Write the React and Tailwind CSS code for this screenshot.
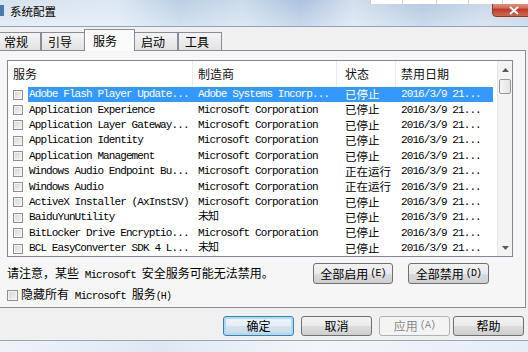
import React from 'react';

const cjk = "font-['Noto_Sans_CJK_SC',sans-serif]";
const mono = "font-['Liberation_Mono','Noto_Sans_CJK_SC',monospace] tracking-[-0.9px]";

const services = [
  { name: 'Adobe Flash Player Update...', vendor: 'Adobe Systems Incorp...', status: '已停止', selected: true },
  { name: 'Application Experience', vendor: 'Microsoft Corporation', status: '已停止' },
  { name: 'Application Layer Gateway...', vendor: 'Microsoft Corporation', status: '已停止' },
  { name: 'Application Identity', vendor: 'Microsoft Corporation', status: '已停止' },
  { name: 'Application Management', vendor: 'Microsoft Corporation', status: '已停止' },
  { name: 'Windows Audio Endpoint Bu...', vendor: 'Microsoft Corporation', status: '正在运行' },
  { name: 'Windows Audio', vendor: 'Microsoft Corporation', status: '正在运行' },
  { name: 'ActiveX Installer (AxInstSV)', vendor: 'Microsoft Corporation', status: '已停止' },
  { name: 'BaiduYunUtility', vendor: '未知', status: '已停止' },
  { name: 'BitLocker Drive Encryptio...', vendor: 'Microsoft Corporation', status: '已停止' },
  { name: 'BCL EasyConverter SDK 4 L...', vendor: '未知', status: '已停止' },
];

const tabs = [
  { label: '常规' },
  { label: '引导' },
  { label: '服务', active: true },
  { label: '启动' },
  { label: '工具' },
];

const Checkbox = ({ big }) => (
  <span
    className={`block shrink-0 border border-[#8f8f8f] bg-linear-to-br from-[#d4d4d4] to-[#f7f7f7] shadow-[inset_0_0_0_1px_#f3f3f3] ${
      big ? 'h-[11px] w-[11px]' : 'h-[10px] w-[10px]'
    }`}
  />
);

const WinButton = ({ children, kind, className }) => {
  let look =
    'border-[#707070] bg-[linear-gradient(#f2f2f2_0%,#ebebeb_50%,#dddddd_51%,#cfcfcf_100%)] text-black';
  if (kind === 'default') {
    look =
      'border-[#3c7fb1] bg-[linear-gradient(#f0f5f9_0%,#e6eef5_50%,#d6e3ee_51%,#cad9e6_100%)] shadow-[inset_0_0_0_2px_#a9dcf6] text-black';
  }
  if (kind === 'disabled') {
    look = 'border-[#adb2b5] bg-[#f4f4f4] text-[#8a8a8a]';
  }
  return (
    <div
      className={`flex items-center justify-center whitespace-nowrap rounded-[3px] border text-[12px] leading-[14px] ${cjk} ${look} ${className}`}
    >
      {children}
    </div>
  );
};

const ServiceRow = ({ name, vendor, status, selected }) => (
  <div className="flex h-[15.4px] shrink-0 items-center">
    <div className="flex w-[20px] shrink-0 items-center pl-[5px]">
      <Checkbox />
    </div>
    <div
      className={`flex h-full w-[465px] shrink-0 items-center whitespace-nowrap text-[11px] leading-none ${
        selected ? 'bg-[#3399ff] text-white' : 'text-black'
      }`}
    >
      <span className={`w-[165px] shrink-0 pl-[1px] ${mono}`}>{name}</span>
      <span className={`w-[144px] shrink-0 pl-[5px] ${mono}`}>{vendor}</span>
      <span className={`w-[59px] shrink-0 pl-[8px] text-[11.5px] ${cjk}`}>{status}</span>
      <span className={`w-[97px] shrink-0 pl-[5px] ${mono}`}>2016/3/9 21...</span>
    </div>
  </div>
);

const Arrow = ({ down }) => (
  <svg width="7" height="4" viewBox="0 0 7 4" className={down ? 'rotate-180' : ''}>
    <path d="M0 4 L3.5 0 L7 4 Z" fill="#5a5a5a" />
  </svg>
);

export default function App() {
  return (
    <div className="relative flex h-[352px] w-[528px] flex-col overflow-hidden bg-[#f0f0f0]">
      {/* title bar */}
      <div className="flex h-[27px] shrink-0 items-start border-b border-[#8ea2b8] bg-[linear-gradient(to_bottom,rgba(255,255,255,0.05),rgba(255,255,255,0.4)),linear-gradient(to_right,#d3e0ee_0%,#dbe6f1_22%,#b7cde4_34%,#c9d9ea_46%,#a6c0dc_57%,#d0dded_67%,#acc4de_80%,#c4d5e8_92%,#b6cbe2_100%)]">
        <div className="mt-[5px] h-[11px] w-[4px] bg-[#4a78b0]" />
        <div className={`ml-[6px] mt-[4px] text-[11.5px] leading-[14px] text-black ${cjk}`}>系统配置</div>
        <div className="-mr-[7px] ml-auto flex h-[17px] w-[43px] items-center justify-center rounded-bl-[4px] border border-[#8a3a30] bg-[linear-gradient(#e9a99a_0%,#d0705e_45%,#c0392b_55%,#d36a50_100%)]">
          <svg width="10" height="9" viewBox="0 0 10 9" className="mt-[3px]">
            <path d="M1 1 L9 8 M9 1 L1 8" stroke="white" strokeWidth="2" />
          </svg>
        </div>
      </div>

      {/* overlapping window strip */}
      <div className="absolute left-[370px] top-0 flex h-[4px] w-[158px] border-l border-[#cfcfcf] bg-white">
        <div className="w-[32px] border-r border-[#d4d4d4]" />
        <div className="w-[34px] border-r border-[#d4d4d4]" />
        <div className="w-[32px] border-r border-[#d4d4d4]" />
        <div className="w-[34px] border-r border-[#d4d4d4]" />
      </div>

      {/* tabs */}
      <div className="-ml-[3px] flex h-[23px] shrink-0 items-end">
        {tabs.map((t) =>
          t.active ? (
            <div
              key={t.label}
              className={`relative z-10 -mb-px -mx-[1px] flex h-[22px] w-[51px] items-start border border-b-0 border-[#898c95] bg-[#fbfbfb] pl-[8px] pt-[4px] text-[12px] leading-[14px] text-black ${cjk}`}
            >
              {t.label}
            </div>
          ) : (
            <div
              key={t.label}
              className={`flex h-[18px] w-[44px] items-center border border-b-0 border-[#898c95] bg-[linear-gradient(#f4f4f4,#e3e3e3)] pl-[6px] text-[12px] leading-[14px] text-black ${cjk}`}
            >
              {t.label}
            </div>
          )
        )}
      </div>

      {/* tab panel */}
      <div className="-ml-px flex h-[258px] w-[527px] shrink-0 flex-col border border-[#898c95] bg-[#f6f6f6]">
        {/* list */}
        <div className="ml-[7px] mt-[9px] flex h-[197px] w-[506px] shrink-0 border border-[#828790] bg-white">
          <div className="flex min-w-0 flex-1 flex-col overflow-hidden">
            <div className={`flex h-[26px] shrink-0 items-center text-[12px] leading-[14px] text-[#111] ${cjk}`}>
              <div className="flex h-full w-[185px] shrink-0 items-center border-r border-[#ebebeb] pl-[5px]">服务</div>
              <div className="flex h-full w-[144px] shrink-0 items-center border-r border-[#ebebeb] pl-[5px]">制造商</div>
              <div className="flex h-full w-[59px] shrink-0 items-center border-r border-[#ebebeb] pl-[8px]">状态</div>
              <div className="flex h-full flex-1 items-center pl-[5px]">禁用日期</div>
            </div>
            {services.map((s) => (
              <ServiceRow key={s.name} {...s} />
            ))}
            {/* next row, scrolled mostly out of view */}
            <div className="flex h-[15.4px] shrink-0 items-center pl-[5px]">
              <Checkbox />
            </div>
          </div>
          {/* scrollbar */}
          <div className="flex w-[15px] shrink-0 flex-col border-l border-[#e6e6e6] bg-[#f3f3f3]">
            <div className="flex h-[17px] items-center justify-center">
              <Arrow />
            </div>
            <div className="mx-[1px] mt-[1px] h-[15px] rounded-[2px] border border-[#979797] bg-[linear-gradient(to_right,#f6f6f6,#e4e4e4)]" />
            <div className="flex-1" />
            <div className="flex h-[17px] items-center justify-center">
              <Arrow down />
            </div>
          </div>
        </div>

        {/* note + enable/disable all */}
        <div className="mt-[6px] flex h-[21px] shrink-0 items-center pl-[7px] pr-[36px]">
          <span className="whitespace-nowrap text-[12px] leading-[14px] text-black">
            <span className={cjk}>请注意，某些</span>
            <span className={`text-[11px] ${mono}`}> Microsoft </span>
            <span className={cjk}>安全服务可能无法禁用。</span>
          </span>
          <div className="flex-1" />
          <WinButton className="h-[21px] w-[80px]">
            全部启用<span className={`ml-[2px] text-[10px] ${mono}`}>(E)</span>
          </WinButton>
          <WinButton className="ml-[15px] h-[21px] w-[81px]">
            全部禁用<span className={`ml-[2px] text-[10px] ${mono}`}>(D)</span>
          </WinButton>
        </div>

        {/* hide MS services */}
        <div className="mt-[6px] flex h-[11px] shrink-0 items-center pl-[7px]">
          <Checkbox big />
          <span className="ml-[3px] whitespace-nowrap text-[12px] leading-[14px] text-black">
            <span className={cjk}>隐藏所有</span>
            <span className={`text-[11px] ${mono}`}> Microsoft </span>
            <span className={cjk}>服务</span>
            <span className={`text-[10px] ${mono}`}>(H)</span>
          </span>
        </div>
      </div>

      {/* bottom buttons */}
      <div className="flex h-[32px] shrink-0 items-start justify-end pr-[4px] pt-[8px]">
        <WinButton kind="default" className="h-[20px] w-[71px]">确定</WinButton>
        <WinButton className="ml-[7px] h-[20px] w-[71px]">取消</WinButton>
        <WinButton kind="disabled" className="ml-[7px] h-[20px] w-[71px]">
          应用<span className={`ml-[2px] text-[10px] ${mono}`}>(A)</span>
        </WinButton>
        <WinButton className="ml-[3px] h-[20px] w-[71px]">帮助</WinButton>
      </div>

      {/* window frame bottom */}
      <div className="flex-1 border-t border-[#9aa6b4] bg-[linear-gradient(to_right,#eef3f8,#dfe8f2_30%,#f2f6fa_60%,#e6edf5)]" />
    </div>
  );
}
